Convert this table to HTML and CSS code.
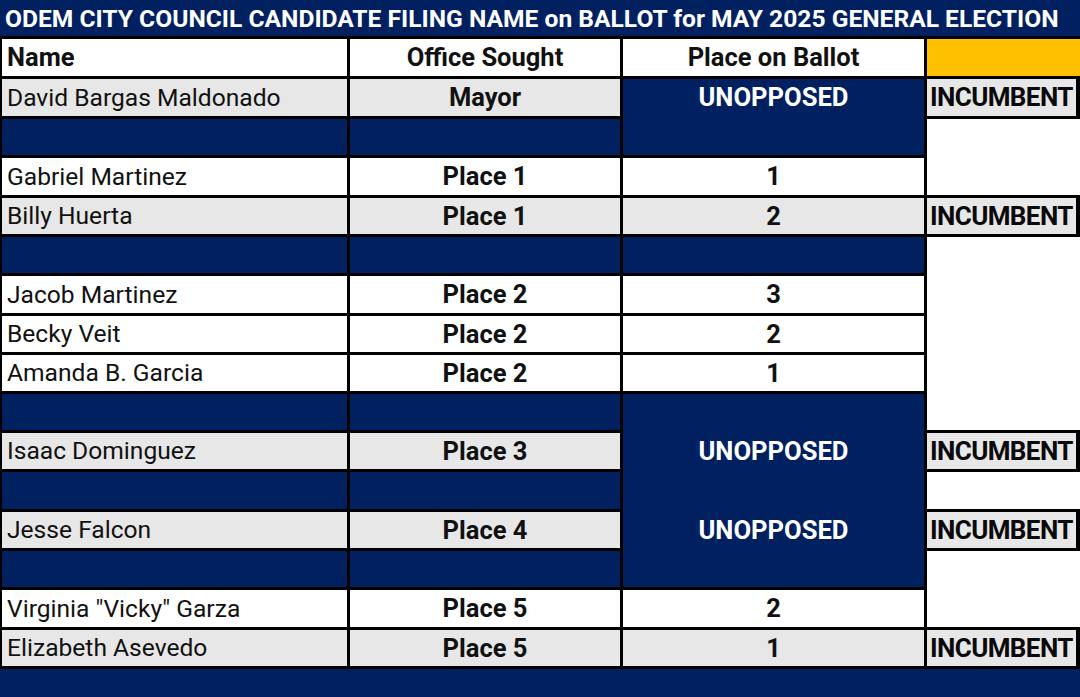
FILE: index.html
```html
<!DOCTYPE html>
<html lang="en">
<head>
<meta charset="utf-8">
<title>Odem City Council Candidate Filing</title>
<link rel="stylesheet" href="styles.css">
</head>
<body>
<div class="sheet">
  <div class="title">ODEM CITY COUNCIL CANDIDATE FILING NAME on BALLOT for MAY 2025 GENERAL ELECTION</div>

  <div class="cell white bold">Name</div>
  <div class="cell white bold center">Office Sought</div>
  <div class="cell white bold center">Place on Ballot</div>
  <div class="cell gold"></div>

  <div class="cell gray">David Bargas Maldonado</div>
  <div class="cell gray bold center">Mayor</div>
  <div class="merge merge2"><span class="unopp">UNOPPOSED</span></div>
  <div class="inc">INCUMBENT</div>

  <div class="cell navy"></div>
  <div class="cell navy"></div>
  <div class="blankd span2"></div>

  <div class="cell white">Gabriel Martinez</div>
  <div class="cell white bold center">Place 1</div>
  <div class="cell white bold center">1</div>

  <div class="cell gray">Billy Huerta</div>
  <div class="cell gray bold center">Place 1</div>
  <div class="cell gray bold center">2</div>
  <div class="inc">INCUMBENT</div>

  <div class="cell navy"></div>
  <div class="cell navy"></div>
  <div class="cell navy"></div>
  <div class="blankd span5"></div>

  <div class="cell white">Jacob Martinez</div>
  <div class="cell white bold center">Place 2</div>
  <div class="cell white bold center">3</div>

  <div class="cell white">Becky Veit</div>
  <div class="cell white bold center">Place 2</div>
  <div class="cell white bold center">2</div>

  <div class="cell white">Amanda B. Garcia</div>
  <div class="cell white bold center">Place 2</div>
  <div class="cell white bold center">1</div>

  <div class="cell navy"></div>
  <div class="cell navy"></div>
  <div class="merge merge5">
    <span class="unopp row2">UNOPPOSED</span>
    <span class="unopp row4">UNOPPOSED</span>
  </div>

  <div class="cell gray">Isaac Dominguez</div>
  <div class="cell gray bold center">Place 3</div>
  <div class="inc">INCUMBENT</div>

  <div class="cell navy"></div>
  <div class="cell navy"></div>
  <div class="blankd"></div>

  <div class="cell gray">Jesse Falcon</div>
  <div class="cell gray bold center">Place 4</div>
  <div class="inc">INCUMBENT</div>

  <div class="cell navy"></div>
  <div class="cell navy"></div>
  <div class="blankd span2"></div>

  <div class="cell white">Virginia "Vicky" Garza</div>
  <div class="cell white bold center">Place 5</div>
  <div class="cell white bold center">2</div>

  <div class="cell gray">Elizabeth Asevedo</div>
  <div class="cell gray bold center">Place 5</div>
  <div class="cell gray bold center">1</div>
  <div class="inc">INCUMBENT</div>

  <div class="footer"></div>
</div>
</body>
</html>
```

FILE: styles.css
```css
html, body {
  margin: 0;
  padding: 0;
  background: #ffffff;
}

body {
  width: 1080px;
  height: 697px;
  overflow: hidden;
  font-family: Roboto, "Liberation Sans", sans-serif;
  color: #111111;
}

.sheet {
  display: grid;
  width: 1080px;
  height: 697px;
  box-sizing: border-box;
  padding-left: 2px;
  background: #000000;
  grid-template-columns: 345px 270px 301px 153px;
  grid-template-rows: 36px 37px 37px 36px 37px 36px 36px 37px 36px 36px 36px 36px 37px 36px 36px 37px 36px 28px;
  column-gap: 3px;
  row-gap: 3px;
}

.title {
  grid-column: 1 / -1;
  margin-left: -2px;
  background: #002060;
  color: #ffffff;
  font-weight: 700;
  font-size: 24.6px;
  display: flex;
  align-items: center;
  padding-left: 5px;
  white-space: nowrap;
}

.footer {
  grid-column: 1 / -1;
  margin-left: -2px;
  background: #002060;
}

.cell {
  display: flex;
  align-items: center;
  padding-left: 5px;
  padding-bottom: 1px;
  font-size: 24.6px;
  white-space: nowrap;
}

.cell.bold {
  font-size: 25.5px;
}

.cell.center {
  justify-content: center;
  padding-left: 0;
}

.bold {
  font-weight: 700;
}

.white {
  background: #ffffff;
}

.gray {
  background: #e7e7e7;
}

.navy {
  background: #002060;
}

.gold {
  background: #ffc000;
}

.merge {
  background: #002060;
  display: grid;
  row-gap: 3px;
}

.merge2 {
  grid-row: span 2;
  grid-template-rows: 37px 36px;
}

.merge5 {
  grid-row: span 5;
  grid-template-rows: 36px 36px 37px 36px 36px;
}

.unopp {
  color: #ffffff;
  font-weight: 700;
  font-size: 25.6px;
  display: flex;
  align-items: center;
  justify-content: center;
  padding-bottom: 1px;
}

.merge5 .row2 {
  grid-row: 2;
}

.merge5 .row4 {
  grid-row: 4;
}

.inc {
  background: #e7e7e7;
  border-right: 3px solid #000000;
  margin-right: 1px;
  display: flex;
  align-items: center;
  padding-left: 3px;
  padding-bottom: 1px;
  font-weight: 700;
  font-size: 26px;
  letter-spacing: -0.6px;
  color: #0a0a0a;
  white-space: nowrap;
  overflow: hidden;
}

.blankd {
  background: #ffffff;
}

.span2 {
  grid-row: span 2;
}

.span5 {
  grid-row: span 5;
}
```
